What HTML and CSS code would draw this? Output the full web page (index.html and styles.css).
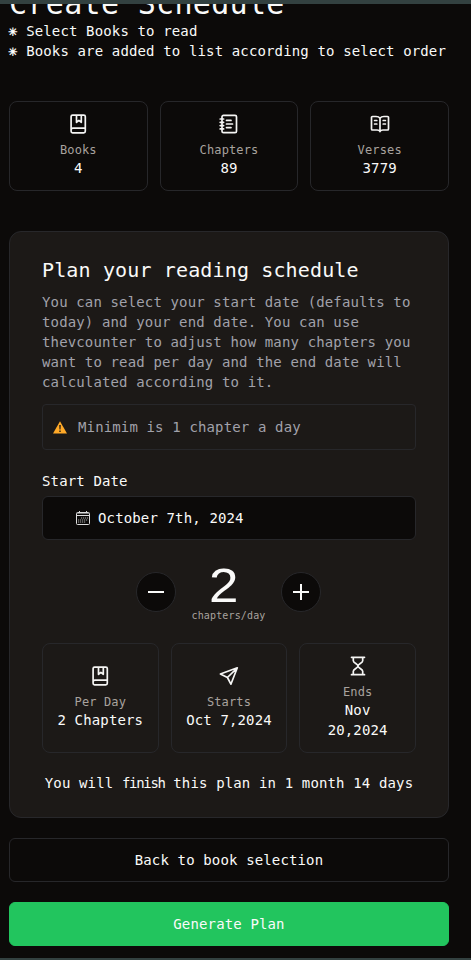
FILE: index.html
```html
<!DOCTYPE html>
<html lang="en">
<head>
<meta charset="utf-8">
<title>Create Schedule</title>
<link rel="stylesheet" href="styles.css">
</head>
<body>
<svg class="sprite" aria-hidden="true">
  <symbol id="book" viewBox="0 0 20 20"><path d="M4.600 1.100h11.200a1.500 1.500 0 0 1 1.500 1.500v14.700a1.500 1.500 0 0 1-1.500 1.500H4.600a1.500 1.500 0 0 1-1.500-1.500V2.600a1.500 1.500 0 0 1 1.500-1.500ZM3.100 16a1.800 1.800 0 0 1 1.800-1.800h12.400M8.500 1.300v7l2.400-1.900 2.400 1.900v-7"/></symbol>
  <symbol id="notebook" viewBox="0 0 20 20"><path d="M4.500 1.300h11.500a1.500 1.500 0 0 1 1.500 1.500v14.400a1.500 1.500 0 0 1-1.500 1.500H4.500a1.500 1.500 0 0 1-1.500-1.500V2.800a1.500 1.500 0 0 1 1.500-1.500ZM1.200 5h3.400M1.200 8.300h3.400M1.200 11.600h3.400M1.200 14.900h3.400M7.500 6.400H12M7.500 10h6M7.500 13.600H12"/></symbol>
  <symbol id="open-book" viewBox="0 0 20 20"><path d="M10 4.200v13.300M10 4.200C9 2.800 7.800 2.500 6 2.500H2.500a1 1 0 0 0-1 1V15a1 1 0 0 0 1 1H7c1.600 0 2.500.4 3 1.500.5-1.100 1.400-1.500 3-1.500h4.500a1 1 0 0 0 1-1V3.500a1 1 0 0 0-1-1H14c-1.800 0-3 .3-4 1.700M4.600 6.500h2.200M4.600 10h2.200M13.200 6.500h2.200M13.200 10h2.200"/></symbol>
  <symbol id="send" viewBox="0 0 20 20"><path d="m18.300 1.800-6.400 16.400-3.500-6.700-7-3.500ZM18.300 1.800l-9.900 9.700"/></symbol>
  <symbol id="hourglass" viewBox="0 0 20 20"><path d="M3.500 1.300h13M3.500 18.700h13M5.300 1.300v3.400c0 2.200 4.700 3.400 4.700 5.300s-4.700 3.100-4.700 5.300v3.400M14.700 1.300v3.400c0 2.200-4.700 3.400-4.700 5.300s4.700 3.100 4.700 5.300v3.400"/></symbol>
</svg>
<main class="page">
  <header class="intro">
    <h1>Create Schedule</h1>
    <p><span class="star">⁕</span> Select Books to read</p>
    <p><span class="star">⁕</span> Books are added to list according to select order</p>
  </header>

  <section class="cards totals">
    <div class="card"><svg class="icon"><use href="#book"/></svg><span class="caption">Books</span><strong>4</strong></div>
    <div class="card"><svg class="icon"><use href="#notebook"/></svg><span class="caption">Chapters</span><strong>89</strong></div>
    <div class="card"><svg class="icon"><use href="#open-book"/></svg><span class="caption">Verses</span><strong>3779</strong></div>
  </section>

  <section class="panel">
    <h2>Plan your reading schedule</h2>
    <p class="description">You can select your start date (defaults to today) and your end date. You can use thevcounter to adjust how many chapters you want to read per day and the end date will calculated according to it.</p>
    <div class="alert">
      <svg class="warning" viewBox="0 0 14 13"><path fill="#ffa928" d="M7 .3 14 12.600H0Z"/><path fill="#3b2b16" d="M6.100 4h1.800l-.3 4.600H6.400ZM6.200 9.500h1.600v1.600H6.200Z"/></svg>
      <span>Minimim is 1 chapter a day</span>
    </div>
    <div class="label">Start Date</div>
    <button class="date">
      <svg class="calendar" viewBox="0 0 14 14"><path fill="none" stroke="#ddd" d="M1.500 1.500h11a1 1 0 0 1 1 1v10a1 1 0 0 1-1 1h-11a1 1 0 0 1-1-1v-10a1 1 0 0 1 1-1ZM.5 4.500h13M3.500 0v3M10.500 0v3"/><path fill="none" stroke="#777" d="M1 2.500h12"/><path stroke="#aaa" stroke-dasharray="1.200 .8" d="M5 7h7M2 9h10M2 11h8"/></svg>
      <span>October 7th, 2024</span>
    </button>
    <div class="counter">
      <button class="round" aria-label="Decrease"><svg viewBox="0 0 16 16"><path d="M0 8h16"/></svg></button>
      <div class="amount"><span class="number">2</span><span class="unit">chapters/day</span></div>
      <button class="round" aria-label="Increase"><svg viewBox="0 0 16 16"><path d="M0 8h16M8 0v16"/></svg></button>
    </div>
    <div class="cards plan">
      <div class="card"><svg class="icon"><use href="#book"/></svg><span class="caption">Per Day</span><strong>2 Chapters</strong></div>
      <div class="card"><svg class="icon"><use href="#send"/></svg><span class="caption">Starts</span><strong>Oct 7,2024</strong></div>
      <div class="card"><svg class="icon"><use href="#hourglass"/></svg><span class="caption">Ends</span><strong>Nov 20,2024</strong></div>
    </div>
    <p class="finish">You will <span class="tight">finish</span> this plan in 1 month 14 days</p>
  </section>

  <button class="action back">Back to book selection</button>
  <button class="action generate">Generate Plan</button>
</main>
</body>
</html>
```
FILE: styles.css
```css
* { box-sizing: border-box; margin: 0; }
html { background: #0c0a09; }
body {
  height: 960px;
  overflow: hidden;
  border-top: 4px solid #334140;
  border-bottom: 2px solid #334140;
  background: #0c0a09;
  color: #fafaf9;
  font: 14px/20px "DejaVu Sans Mono", "Liberation Mono", monospace;
  letter-spacing: 0.01em;
}
button { font: inherit; letter-spacing: inherit; color: inherit; padding: 0; }
.sprite { display: none; }
.page { display: flex; flex-direction: column; width: 440px; margin-left: 9px; }
.intro { height: 97px; }
h1 { margin-top: -18px; font-size: 30px; line-height: 35px; font-weight: 400; letter-spacing: 0.32px; white-space: nowrap; }
.intro p { white-space: pre; }
.star { display: inline-block; width: 8.570px; font-size: 17px; line-height: 19px; text-indent: -1px; vertical-align: top; }

.cards { display: grid; grid-template-columns: repeat(3, minmax(0, 1fr)); gap: 12px; }
.card {
  display: flex;
  flex-direction: column;
  align-items: center;
  justify-content: center;
  border: 1px solid #27272a;
  border-radius: 8px;
  text-align: center;
}
.card strong { font-weight: 400; }
.totals { height: 90px; }
.icon {
  width: 20px;
  height: 20px;
  margin-bottom: 8px;
  fill: none;
  stroke: #f5f5f4;
  stroke-width: 1.700;
  stroke-linecap: round;
  stroke-linejoin: round;
}
.caption { color: #a8a29e; font-size: 12px; line-height: 16px; }

.panel {
  height: 587px;
  margin-top: 40px;
  padding: 24px 32px 0;
  border: 1px solid #27272a;
  border-radius: 12px;
  background: #1c1917;
}
h2 { font-size: 20px; line-height: 28px; font-weight: 400; white-space: nowrap; }
.description { height: 100px; margin: 8px -4px 0 0; color: #a1a1aa; }
.alert {
  display: flex;
  align-items: center;
  gap: 11px;
  height: 46px;
  margin-top: 12px;
  padding-left: 10px;
  border: 1px solid #27272a;
  border-radius: 4px;
  color: #a1a1aa;
}
.warning { width: 14px; height: 13px; }
.label { margin-top: 21px; }
.date {
  display: flex;
  align-items: center;
  gap: 8px;
  width: 100%;
  height: 44px;
  margin-top: 5px;
  padding-left: 33px;
  border: 1px solid #27272a;
  border-radius: 6px;
  background: #0c0a09;
}
.calendar { width: 14px; height: 14px; }
.counter { display: flex; justify-content: center; gap: 16px; height: 103px; padding: 22px 0 0; margin-left: -1px; }
.round {
  display: grid;
  place-items: center;
  width: 40px;
  height: 40px;
  margin-top: 10px;
  border: 1px solid #27272a;
  border-radius: 50%;
  background: #0c0a09;
}
.round svg { width: 16px; height: 16px; fill: none; stroke: #fafaf9; stroke-width: 2; }
.amount { display: flex; flex-direction: column; align-items: center; width: 73px; }
.number { margin-right: 9px; font-family: "Liberation Sans", Arial, sans-serif; font-size: 49px; line-height: 46px; letter-spacing: 0; transform: scaleX(1.080); }
.unit { margin-top: 3px; color: #a8a29e; font-size: 10px; line-height: 10px; white-space: nowrap; }
.plan { height: 110px; }
.plan .card { padding: 0 12px; }
.finish { margin-top: 20px; text-align: center; white-space: nowrap; }
.tight { letter-spacing: -1.290px; }

.action {
  height: 44px;
  margin-top: 20px;
  border: 1px solid #27272a;
  border-radius: 6px;
  background: #0c0a09;
}
.generate { border-color: #22c55e; background: #22c55e; }
```
